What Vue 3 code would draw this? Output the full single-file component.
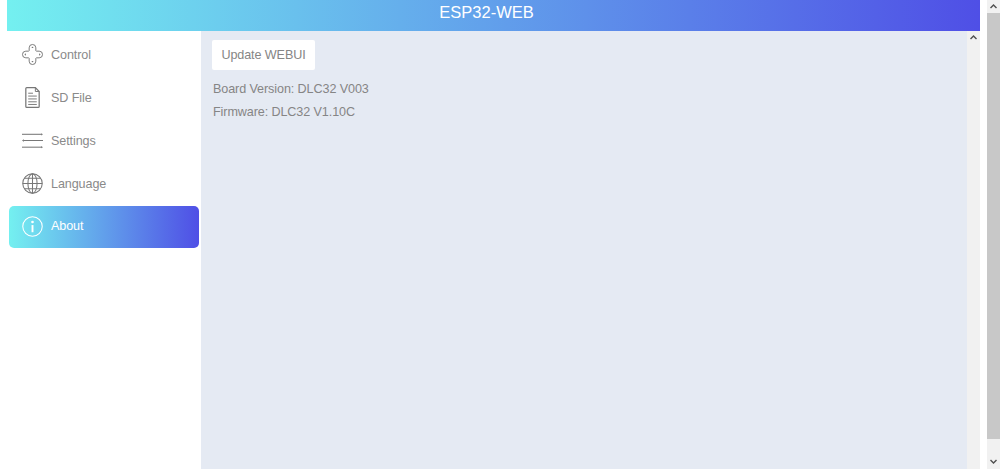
<script setup>
const firmware = [
  { id: 1, text: 'Board Version: DLC32 V003' },
  { id: 2, text: 'Firmware: DLC32 V1.10C' },
]
</script>

<template>
  <div class="page">
    <div class="app">
      <header class="header">ESP32-WEB</header>
      <div class="body">
        <nav class="nav">
          <a class="item">
            <svg class="icon" viewBox="0 0 22 22" fill="none" stroke="currentColor" stroke-width="1">
              <path d="M7.500 7V4a3.500 3.500 0 0 1 7 0v3l.5.5h3a3.500 3.500 0 0 1 0 7h-3l-.5.5v3a3.500 3.500 0 0 1-7 0v-3l-.5-.5H4a3.500 3.500 0 0 1 0-7h3z" />
              <path d="M11 2.500l1.200 1.600H9.800zM11 19.500l1.200-1.600H9.800zM2.500 11l1.600-1.200v2.400zM19.500 11l-1.600-1.200v2.400z" fill="currentColor" stroke="none" />
            </svg>
            <span>Control</span>
          </a>
          <a class="item">
            <svg class="icon" viewBox="0 0 22 22" fill="none" stroke="currentColor" stroke-width="1.300">
              <path d="M5 .7h9l4 4V20.300a1 1 0 0 1-1 1H5a1 1 0 0 1-1-1V1.700a1 1 0 0 1 1-1z" />
              <path d="M14 .7v4h4M6.500 6.500h5M6.500 9.500h9M6.500 12.500h9M6.500 15.500h9M6.500 18.300h9" stroke-width="1" />
            </svg>
            <span>SD File</span>
          </a>
          <a class="item">
            <svg class="icon" viewBox="0 0 22 22" fill="none" stroke="currentColor" stroke-width="1.100">
              <path d="M0 4.500h20" /><path d="M20 3.300l2 1.200-2 1.200z" fill="currentColor" stroke="none" />
              <path d="M2 11h20" /><path d="M2 9.800l-2 1.200 2 1.200z" fill="currentColor" stroke="none" />
              <path d="M0 18h20" /><path d="M20 16.800l2 1.200-2 1.200z" fill="currentColor" stroke="none" />
            </svg>
            <span>Settings</span>
          </a>
          <a class="item">
            <svg class="icon" viewBox="0 0 22 22" fill="none" stroke="currentColor" stroke-width="1.100">
              <circle cx="11" cy="11" r="10.200" />
              <ellipse cx="11" cy="11" rx="4.800" ry="10.200" />
              <path d="M11 .8v20.400M.8 11h20.400M2.300 5.500h17.400M2.300 16.500h17.400" />
            </svg>
            <span>Language</span>
          </a>
          <a class="item active">
            <svg class="icon" viewBox="0 0 22 22" fill="none" stroke="currentColor" stroke-width="1.100">
              <circle cx="11" cy="11" r="10.200" />
              <circle cx="11" cy="6.300" r="1.400" fill="currentColor" stroke="none" />
              <path d="M11 9.500V17" stroke-width="2" />
            </svg>
            <span>About</span>
          </a>
        </nav>
        <main class="main">
          <div class="content">
            <button class="update">Update WEBUI</button>
            <p v-for="line in firmware" :key="line.id" class="info">{{ line.text }}</p>
          </div>
          <div class="bar inner">
            <svg class="arrow" viewBox="0 0 9 6"><path d="M4.500 1L8 4.500 7 5.400 4.500 3 2 5.400 1 4.500z" /></svg>
          </div>
        </main>
      </div>
    </div>
    <div class="bar outer">
      <svg class="arrow" viewBox="0 0 9 6"><path d="M4.500 1L8 4.500 7 5.400 4.500 3 2 5.400 1 4.500z" /></svg>
      <div class="thumb"></div>
      <svg class="arrow" viewBox="0 0 9 6"><path d="M4.500 5L8 1.500 7 .6 4.500 3 2 .6 1 1.500z" /></svg>
    </div>
  </div>
</template>

<style>
html, body { margin: 0; overflow: hidden; background: #fff; }
</style>

<style scoped>
.page {
  display: flex;
  height: 469px;
  width: 1000px;
  font-family: "Liberation Sans", Arial, sans-serif;
  background: #fff;
  overflow: hidden;
}
.app {
  width: 973px;
  margin-left: 7px;
  display: flex;
  flex-direction: column;
}
.header {
  height: 31px;
  flex: none;
  box-sizing: border-box;
  padding-right: 14px;
  background: linear-gradient(90deg, #74f0f0, #4f4fe6);
  color: #fff;
  font-size: 16.500px;
  line-height: 25px;
  text-align: center;
}
.body { flex: 1; display: flex; min-height: 0; }
.nav {
  width: 194px;
  flex: none;
  box-sizing: border-box;
  padding: 2px 2px 0;
  display: flex;
  flex-direction: column;
}
.item {
  height: 43px;
  flex: none;
  display: flex;
  align-items: center;
  gap: 8px;
  padding-left: 13px;
  box-sizing: border-box;
  font-size: 12.600px;
  letter-spacing: -0.1px;
  color: #8a8a8a;
  border-radius: 5px;
}
.item .icon { color: #777; }
.item.active {
  color: #fff;
  margin-top: 1px;
  height: 42px;
  padding-bottom: 2px;
  background: linear-gradient(90deg, #74f0f0, #4f4fe6);
}
.item.active .icon { color: #fff; }
.icon { width: 21px; height: 21px; flex: none; overflow: visible; }
.main { flex: 1; display: flex; min-width: 0; background: #e5eaf3; }
.content { flex: 1; padding: 9px 0 0 11px; min-width: 0; }
.update {
  display: block;
  height: 30px;
  width: 103px;
  padding: 0;
  border: 0;
  border-radius: 2px;
  background: #fff;
  color: #858585;
  font: 12.600px "Liberation Sans", Arial, sans-serif;
  letter-spacing: -0.1px;
  margin-bottom: 8px;
}
.info {
  margin: 0 0 0 1px;
  height: 23px;
  line-height: 23px;
  font-size: 12.600px;
  letter-spacing: -0.1px;
  color: #858585;
}
.bar {
  width: 13px;
  flex: none;
  background: #f1f1f1;
  display: flex;
  flex-direction: column;
  align-items: center;
}
.outer { margin-left: 7px; height: 469px; justify-content: space-between; }
.arrow { width: 9px; height: 6px; flex: none; fill: #505050; margin: 3px 0 4px; }
.thumb { flex: 1; width: 13px; background: #c8c8c8; margin-bottom: 17px; }
</style>
